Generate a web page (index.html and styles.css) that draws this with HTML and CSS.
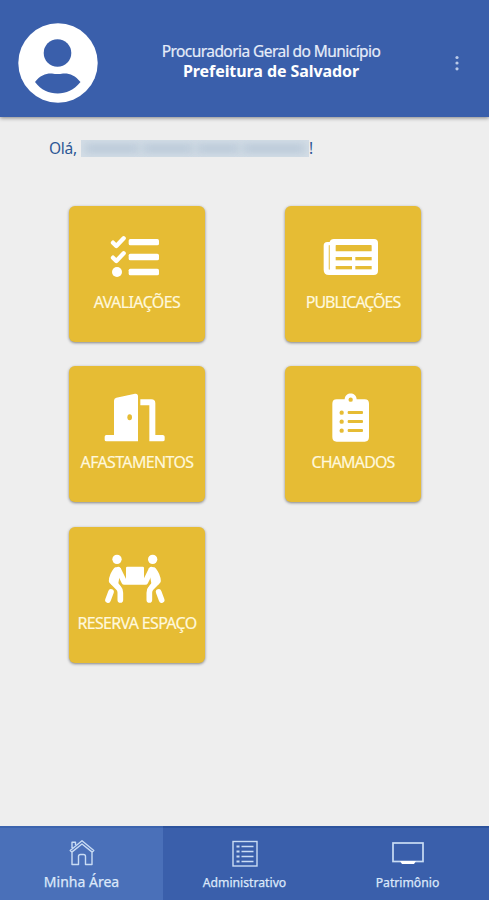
FILE: index.html
```html
<!DOCTYPE html>
<html lang="pt-BR">
<head>
<meta charset="utf-8">
<meta name="viewport" content="width=device-width, initial-scale=1">
<title>Minha Área</title>
<link rel="stylesheet" href="styles.css">
</head>
<body>
<div class="app">
  <header class="header">
    <svg class="avatar" viewBox="0 0 80 80">
      <circle cx="40" cy="40" r="39.700" fill="#fff"/>
      <circle cx="39.500" cy="30" r="13.800" fill="#3a5fab"/>
      <path d="M17 59C22 52 29 50 34 50.500C38 51.300 41 51.300 45 50.500C51 50 57 52 62.500 59C56 67 48 70.500 39.700 70.500C31 70.500 23 67 17 59Z" fill="#3a5fab"/>
    </svg>
    <div class="titles">
      <div class="org"><span>Procuradoria Geral do Município</span></div>
      <div class="city"><span>Prefeitura de Salvador</span></div>
    </div>
    <svg class="more" viewBox="0 0 6 18"><g fill="#bacae8"><circle cx="3" cy="3.500" r="1.600"/><circle cx="3" cy="9" r="1.600"/><circle cx="3" cy="14.800" r="1.600"/></g></svg>
  </header>
  <main class="main">
    <p class="hello"><span class="ola">Olá,</span><span class="name"><i class="w1"></i><i class="w2"></i><i class="w3"></i><i class="w4"></i></span><span>!</span></p>
    <div class="grid">
      <a class="card">
        <svg class="icon" viewBox="28 18 408 240">
          <g fill="none" stroke="#fff" stroke-width="13" stroke-linecap="round" stroke-linejoin="round"><path d="M160 128L170 138L192 115M160 173L170 183L192 160"/></g>
          <g fill="#fff"><circle cx="172" cy="216" r="15"/><rect x="207" y="117" width="91" height="19" rx="5"/><rect x="207" y="161" width="91" height="20" rx="5"/><rect x="207" y="206" width="91" height="20" rx="5"/></g>
        </svg>
        <span class="label l1">AVALIAÇÕES</span>
      </a>
      <a class="card">
        <svg class="icon" viewBox="31 18 408 240">
          <path d="M178 117H298Q310 117 310 129V212Q310 225 297 225H163Q147 225 147 209V137Q147 126 158 126H165Q167 117 178 117Z" fill="#fff"/>
          <g fill="#e6bc34"><rect x="183" y="135" width="108" height="19" rx="2"/><rect x="183" y="171" width="49" height="10"/><rect x="242" y="171" width="49" height="10"/><rect x="183" y="198" width="49" height="10"/><rect x="242" y="198" width="49" height="10"/></g>
          <path d="M164 137V207" stroke="#ecce6d" stroke-width="4" stroke-linecap="round"/>
        </svg>
        <span class="label l2">PUBLICAÇÕES</span>
      </a>
      <a class="card">
        <svg class="icon" viewBox="28 18 408 240">
          <path d="M163 225V122Q163 115 170 113L226 101Q235 100 235 109V244H140Q135 244 135 239V230Q135 225 140 225ZM242 118H275Q287 118 287 130V225H309Q315 225 315 230V239Q315 244 309 244H269V136H242Z" fill="#fff"/>
          <ellipse cx="210" cy="172" rx="7" ry="9" fill="#e6bc34"/>
        </svg>
        <span class="label l3">AFASTAMENTOS</span>
      </a>
      <a class="card">
        <svg class="icon" viewBox="31 18 408 240">
          <path d="M186 118H210C211 95 245 95 246 118H270Q283 118 283 131V231Q283 245 270 245H186Q173 245 173 231V131Q173 118 186 118Z" fill="#fff"/>
          <g fill="#e6bc34"><circle cx="228" cy="119" r="6.500"/><circle cx="201" cy="158" r="6.500"/><circle cx="201" cy="185" r="6.500"/><circle cx="201" cy="212" r="6.500"/><rect x="219" y="153" width="46" height="9" rx="3"/><rect x="219" y="180" width="46" height="9" rx="3"/><rect x="219" y="207" width="46" height="9" rx="3"/></g>
        </svg>
        <span class="label l4">CHAMADOS</span>
      </a>
      <a class="card">
        <svg class="icon" viewBox="28 18 408 240">
          <g fill="#fff"><circle cx="172" cy="115" r="14"/><circle cx="279" cy="115" r="14"/><rect x="199" y="137" width="54" height="46" rx="4"/></g>
          <g fill="none" stroke="#fff" stroke-width="17" stroke-linecap="round" stroke-linejoin="round">
            <path d="M176 146L194 183H257L275 146"/>
            <path d="M169 148Q157 163 156 180L176 200Q182 206 182 215V237M282 148Q294 163 295 180L275 200Q269 206 269 215V237"/>
            <path d="M154 213L145 237M297 213L306 237"/>
          </g>
          <path d="M166 140L184 142L176 187L187 203L154 190L150 172ZM285 140L267 142L275 187L264 203L297 190L301 172Z" fill="#fff"/>
        </svg>
        <span class="label l5">RESERVA ESPAÇO</span>
      </a>
    </div>
  </main>
  <nav class="nav">
    <a class="tab active">
      <svg class="tab-icon" viewBox="0 0 26 28">
        <g fill="none" stroke="#c9dcf4" stroke-width="1.400" stroke-linejoin="round"><path d="M1.200 11.500L13 1.700L24.800 11.500L23.200 13.100L13 5L2.800 13.100ZM3 9V3.300H6.500V6M3 13V25.500H9.500V17.500Q9.500 15.500 11.500 15.500H14.500Q16.500 15.500 16.500 17.500V25.500H23V13"/></g>
      </svg>
      <span class="tab-label t1">Minha Área</span>
    </a>
    <a class="tab">
      <svg class="tab-icon" viewBox="0 0 26 28">
        <g fill="none" stroke="#c9dcf4" stroke-width="1.400"><rect x="1" y="2.500" width="24" height="24.500"/><path d="M9.500 7.500H21.500M9.500 12.500H21.500M9.500 17.500H21.500M9.500 22.500H21.500"/><path d="M4.500 7.500H7.500M4.500 12.500H7.500M4.500 17.500H7.500M4.500 22.500H7.500" stroke-width="2"/></g>
      </svg>
      <span class="tab-label t2">Administrativo</span>
    </a>
    <a class="tab">
      <svg class="tab-icon tv" viewBox="0 0 32 28">
        <rect x="1" y="4" width="30" height="18.500" fill="none" stroke="#c9dcf4" stroke-width="1.700"/><path d="M8 22H24L22 25H10Z" fill="#fff"/>
      </svg>
      <span class="tab-label t3">Patrimônio</span>
    </a>
  </nav>
</div>
</body>
</html>
```

FILE: styles.css
```css
* { box-sizing: border-box; }
body { margin: 0; font-family: "Noto Sans", "Open Sans", sans-serif; }
.app { display: flex; flex-direction: column; height: 900px; background: #eee; overflow: hidden; }

.header {
  display: flex; align-items: center; height: 117px; flex: none;
  padding: 8px 29px 0 18px; background: #3a5fab; color: #fff;
  box-shadow: 0 1px 4px rgba(0, 0, 0, .45);
}
.avatar { width: 80px; height: 80px; flex: none; }
.titles { flex: 1; padding: 0 10px 4px 0; text-align: center; white-space: nowrap; line-height: 20px; }
.org { font-size: 15.500px; letter-spacing: -0.560px; color: #e6edf9; -webkit-text-stroke: .2px #e6edf9; }
.city { font-size: 16px; font-weight: 700; letter-spacing: -0.080px; }
.more { width: 6px; height: 18px; flex: none; }

.main { flex: 1; }
.hello {
  display: flex; align-items: center; height: 22px; margin: 20px 0 0 49px;
  font-size: 15.500px; letter-spacing: -0.300px; color: #2c5795; line-height: 20px;
}
.ola { width: 32px; }
.name {
  display: flex; align-items: center; gap: 4px; width: 228px; height: 17px;
  padding: 0 4px; background: #d3dde6; overflow: hidden;
}
.name i { height: 7px; background: #b3c4d5; filter: blur(4px); }
.w1 { width: 54px; }
.w2 { width: 50px; }
.w3 { width: 42px; }
.w4 { width: 62px; }

.grid {
  display: grid; grid-template-columns: 136px 136px; grid-auto-rows: 136px;
  column-gap: 80px; row-gap: 24.300px; margin: 47px 0 0 69px;
}
.card {
  display: flex; flex-direction: column; align-items: center;
  border-radius: 6px; background: #e6bc34; box-shadow: 0 1px 3px rgba(0, 0, 0, .45);
}
.icon { width: 136px; height: 80px; flex: none; }
.label { font-size: 16px; line-height: 32px; color: #fff8dc; white-space: nowrap; -webkit-text-stroke: .2px #fff8dc; }
.l1 { letter-spacing: -0.600px; }
.l2 { letter-spacing: -1px; }
.l3 { letter-spacing: -0.650px; }
.l4 { letter-spacing: -0.850px; }
.l5 { letter-spacing: -0.680px; }

.nav { display: flex; height: 74px; flex: none; background: #3a5fab; }
.tab {
  display: flex; flex: 1; flex-direction: column; align-items: center;
  padding-top: 11px; border-top: 2px solid #2d539d; color: #dce8fa;
}
.active { background: #4a70b9; border-top-color: #3c64ae; }
.tab-icon { width: 26px; height: 28px; }
.tv { width: 32px; }
.tab-label { white-space: nowrap; -webkit-text-stroke: .25px #dce8fa; }
.t1 { font-size: 14px; line-height: 29px; }
.t2, .t3 { font-size: 12.200px; line-height: 32px; }
```
